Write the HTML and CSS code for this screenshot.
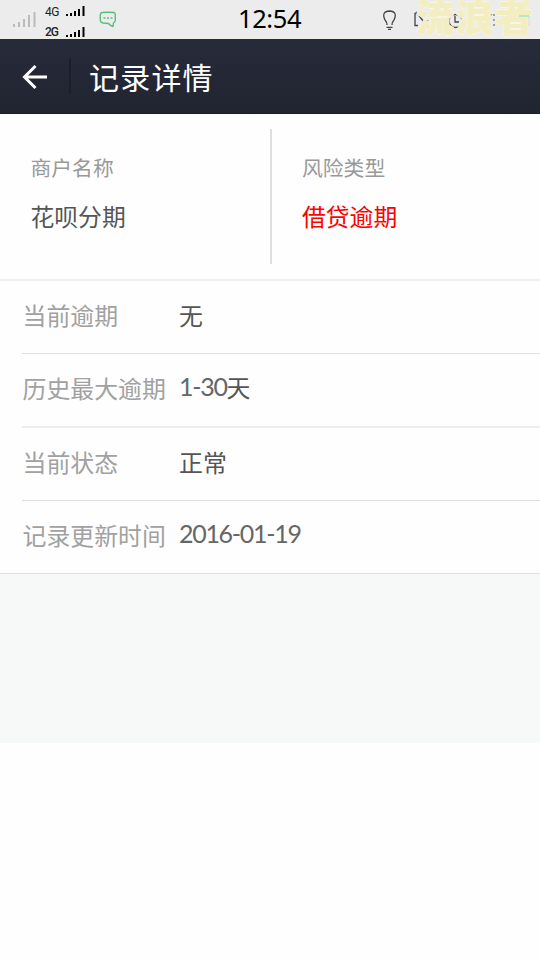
FILE: index.html
```html
<!DOCTYPE html>
<html lang="zh-CN">
<head>
<meta charset="utf-8">
<title>记录详情</title>
<link rel="stylesheet" href="styles.css">
</head>
<body>
<div class="status">
  <svg class="signal-off" width="23" height="16" viewBox="0 0 23 16" fill="#bababa"><path d="M0 12h2v3H0zM5 10h2v5H5zM10 7h2v8h-2zM15 3h2v12h-2zM20.500 0h2v15h-2z"/></svg>
  <div class="nets">
    <div class="net"><span>4G</span><svg width="19" height="11" viewBox="0 0 19 11"><path d="M0 8h2v2H0zM4 7h2v3H4zM8 5h2v5H8zM12 3h2v7h-2zM16.500 0h2v10h-2z"/></svg></div>
    <div class="net low"><span>2G</span><svg width="19" height="11" viewBox="0 0 19 11"><path d="M0 8h2v2H0zM4 7h2v3H4zM8 5h2v5H8zM12 3h2v7h-2zM16.500 0h2v10h-2z"/></svg></div>
  </div>
  <svg class="chat" width="18" height="17" viewBox="0 0 18 17" fill="none" stroke="#5dbd7c" stroke-width="1.400"><path d="M3 1.500Q9 .9 15 1.500Q16.500 2 16.300 4V9Q16.300 11 14.500 12L14 15.500Q11.500 15 9.500 12.500L4 12Q1.500 11.500 1.300 9V4Q1.300 2 3 1.500Z"/><path d="M4.500 7h2M8 7h2M11.500 7h2" stroke-width="1.700"/></svg>
  <time class="clock">12:54</time>
  <svg class="indicators" width="160" height="39" viewBox="380 0 160 39" fill="none" stroke="#444" stroke-width="1.300"><path d="M387 25Q387 22 385 20Q381 11.500 389.500 11Q398 11.500 394 20Q392 22 392 25M386.500 27.300h6M388 29.300h3"/><path d="M418 13.500h-3v12h3M416 12l12 15M427.500 20v7"/><circle cx="455.500" cy="21" r="6.500"/><path d="M455 16v6h4"/><path d="M479 15q7-2 13 0M494 14v2M494 19v2M494 24v2" stroke="#777"/><path d="M503 16h26v9h-26z" stroke="#ddd"/></svg>
  <div class="watermark">流浪者</div>
  <i class="charge"></i>
</div>
<header class="header">
  <svg class="back" width="26" height="26" viewBox="0 0 26 26" fill="none" stroke="#fff" stroke-width="3"><path d="M13.500 2L2.500 13L13.500 24M2.500 13H25"/></svg>
  <h1>记录详情</h1>
</header>
<main>
  <section class="summary">
    <div class="cell"><div class="caption">商户名称</div><div class="name">花呗分期</div></div>
    <div class="cell risk"><div class="caption">风险类型</div><div class="name">借贷逾期</div></div>
  </section>
  <dl class="details">
    <div class="row"><dt>当前逾期</dt><dd>无</dd></div>
    <div class="row thick"><dt>历史最大逾期</dt><dd><span class="num">1-30</span>天</dd></div>
    <div class="row"><dt>当前状态</dt><dd>正常</dd></div>
    <div class="row"><dt>记录更新时间</dt><dd><span class="num">2016-01-19</span></dd></div>
  </dl>
  <div class="blank"></div>
</main>
</body>
</html>
```
FILE: styles.css
```css
* { box-sizing: border-box; }
body { margin: 0; background: #fefefe; font-family: "Noto Sans CJK SC", sans-serif; }
svg { display: block; flex: none; }
.status { position: relative; height: 39px; background: #ececec; display: flex; align-items: flex-start; padding-left: 13px; }
.signal-off { margin-top: 12px; }
.nets { margin-left: 9px; width: 41px; padding-top: 6px; }
.net { display: flex; height: 19.500px; align-items: flex-start; font: 12px/12px Roboto, sans-serif; color: #222; letter-spacing: -0.5px; }
.net span { width: 21px; }
.net.low span { font-weight: 500; letter-spacing: -1px; }
.low svg { margin-top: 1px; }
.chat { margin-left: 13px; margin-top: 11px; }
.clock { position: absolute; left: 238px; top: 0; font: 25.500px/37px "Noto Sans", sans-serif; color: #000; letter-spacing: -0.4px; }
.indicators { margin-left: auto; }
.watermark { position: absolute; left: 416px; top: 0; font-size: 38px; line-height: 30px; font-weight: 900; letter-spacing: 1.500px; color: #f3edc2; text-shadow: 1px 0 #f5f0cf, -1px 0 #f8f6e4, 0 1px #f8f6e4, 0 -1px #f8f6e4; white-space: nowrap; }
.charge { position: absolute; left: 519px; top: 15px; width: 10px; height: 2px; background: #b5e9c0; }
.header { height: 75px; display: flex; align-items: center; padding-left: 22px; background: linear-gradient(#272b3a, #212531); border-bottom: 1px solid #181b26; color: #fff; }
.back { margin-top: 2px; }
h1 { margin: 0 0 0 21px; padding-left: 18px; border-left: 2px solid #1b1e2b; height: 36px; line-height: 37px; font-size: 30px; font-weight: 400; letter-spacing: 1.200px; white-space: nowrap; }
.summary { height: 167px; display: flex; padding-top: 15px; border-bottom: 2px solid #efefef; }
.cell { width: 270px; height: 135px; padding: 23px 0 0 30.500px; }
.risk { border-left: 2px solid #dfdfdf; padding-left: 30px; }
.caption { font-size: 20.800px; line-height: 30px; color: #999; }
.name { margin-top: 17px; font-size: 23.800px; line-height: 34px; color: #555; }
.risk .name { color: #f00; }
.details { margin: 0; border-bottom: 1px solid #e0e0e0; }
.row { height: 73px; margin-left: 22px; padding: 0 0 6px 0.500px; display: flex; align-items: center; border-bottom: 1px solid #dfdfdf; font-size: 23.900px; line-height: 35px; }
.row:last-child { border-bottom: 0; height: 72px; }
.row.thick { height: 74px; border-bottom: 2px solid #ededed; }
dt { width: 156.500px; color: #a1a1a1; white-space: nowrap; }
dd { margin: 0; color: #555; white-space: nowrap; }
.num { position: relative; top: -1px; font-family: Lato, sans-serif; font-size: 25px; letter-spacing: -1.300px; color: #666; }
.blank { height: 169px; background: #f7f9f8; }
```
